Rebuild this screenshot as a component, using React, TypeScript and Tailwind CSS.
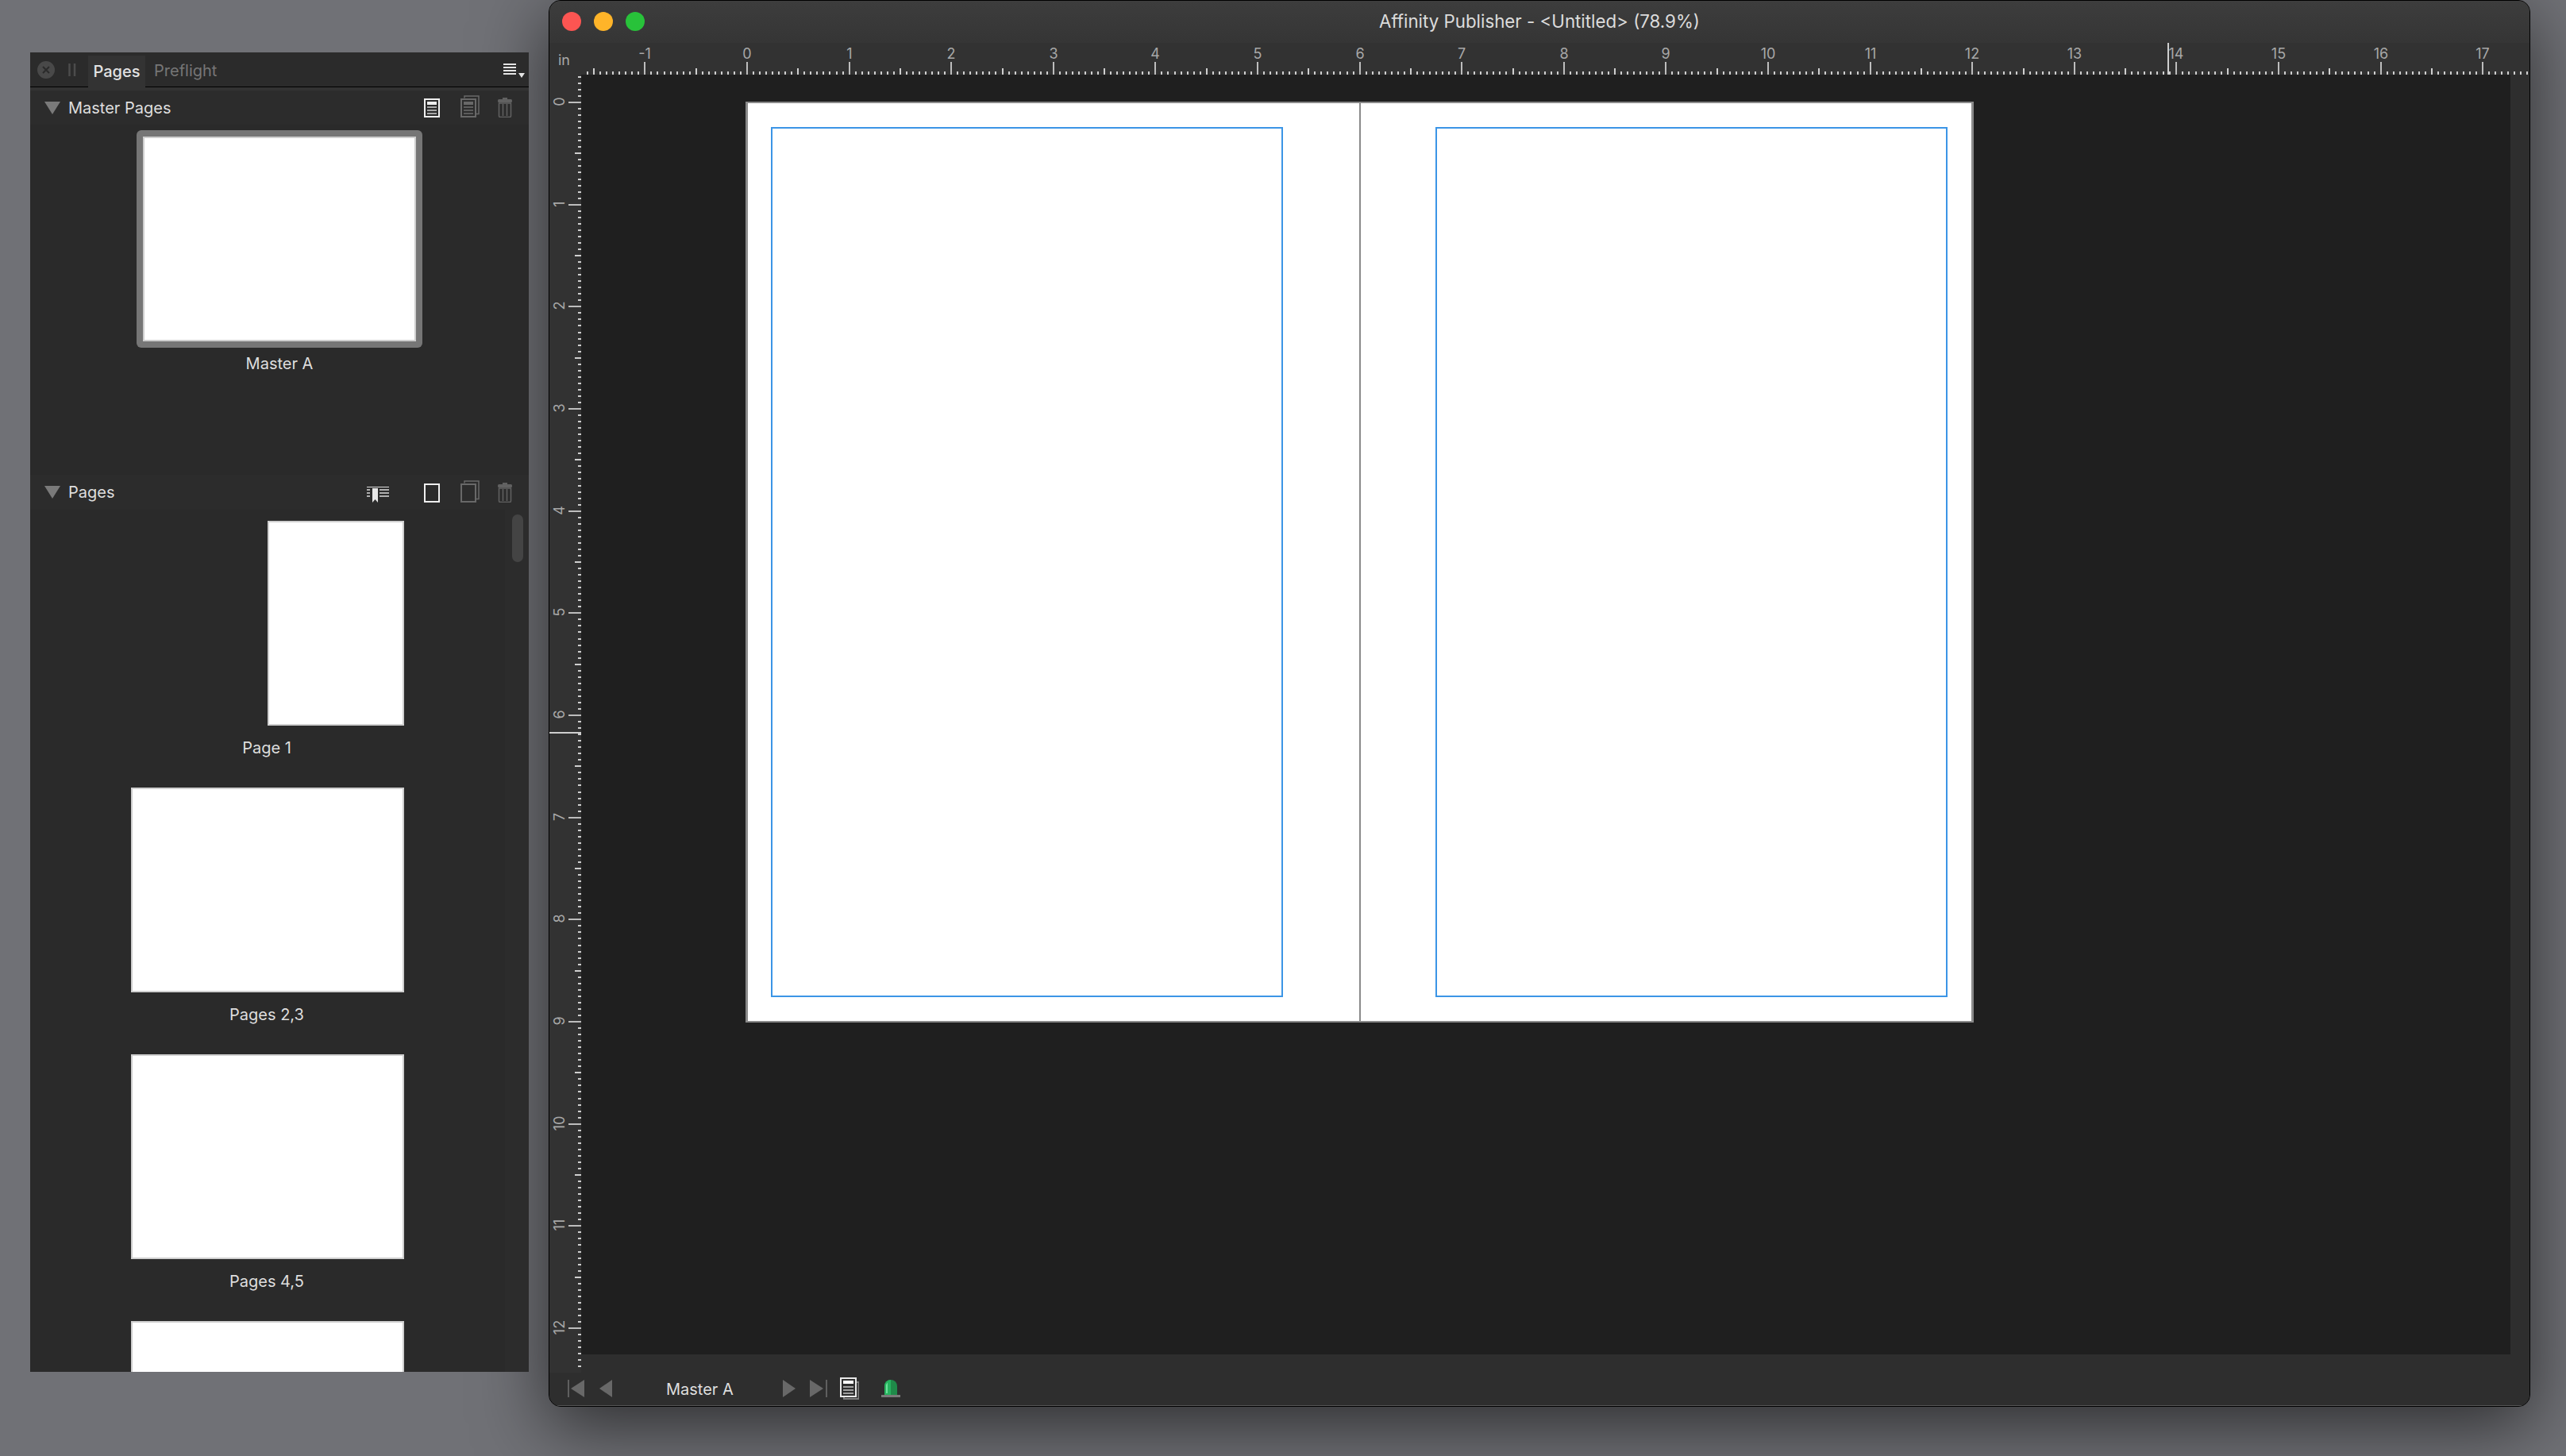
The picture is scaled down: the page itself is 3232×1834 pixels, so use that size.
import React from 'react';

const UNIT_X = 128.6;
const UNIT_Y = 128.67;

function tickSize(i: number) {
  if (i % 16 === 0) return 16;
  if (i % 8 === 0) return 8;
  return 4;
}

function TopRuler() {
  const zero = 209;
  const ticks = Array.from({ length: 330 }, (_, k) => k - 26);
  const labels = Array.from({ length: 19 }, (_, k) => k - 1);
  return (
    <div className="relative flex-1 h-[40px] bg-[#323232]">
      <svg width={2454} height={40} className="block">
        {ticks.map((i) => {
          const x = Math.round(zero + (i * UNIT_X) / 16);
          if (x < 6 || x > 2452) return null;
          const h = tickSize(i);
          return <rect key={i} x={x - 1} y={40 - h} width={2} height={h} fill={i % 16 === 0 ? '#bdbdbd' : '#cfcfcf'} />;
        })}
        <rect x={1998} y={0} width={2} height={40} fill="#cfcfcf" />
      </svg>
      {labels.map((n) => (
        <span
          key={n}
          className="absolute top-[2px] w-[40px] h-[24px] leading-[24px] text-center text-[18px] text-[#a8a8a8]"
          style={{ left: Math.round(zero + n * UNIT_X) - 20 }}
        >
          {n}
        </span>
      ))}
    </div>
  );
}

function LeftRuler() {
  const zero = 35;
  const ticks = Array.from({ length: 204 }, (_, k) => k - 4);
  const labels = Array.from({ length: 13 }, (_, k) => k);
  return (
    <div className="relative w-[40px] h-[1635px] shrink-0 bg-[#323232]">
      <svg width={40} height={1635} className="block">
        {ticks.map((i) => {
          const y = Math.round(zero + (i * UNIT_Y) / 16);
          if (y < 0 || y > 1634) return null;
          const w = tickSize(i);
          return <rect key={i} x={40 - w} y={y - 1} width={w} height={2} fill={i % 16 === 0 ? '#bdbdbd' : '#cfcfcf'} />;
        })}
        <rect x={0} y={828} width={40} height={2} fill="#cfcfcf" />
      </svg>
      {labels.map((n) => (
        <span
          key={n}
          className="absolute left-0 w-[26px] h-[26px] leading-[26px] text-center text-[18px] text-[#a8a8a8] -rotate-90"
          style={{ top: Math.round(zero + n * UNIT_Y) - 14 }}
        >
          {n}
        </span>
      ))}
    </div>
  );
}

function MasterIcon({ color, bar, lines }: { color: string; bar: string; lines: string }) {
  return (
    <svg width={20} height={24} viewBox="0 0 20 24" className="block mr-[3px]">
      <rect x={1} y={1} width={18} height={22} fill="none" stroke={color} strokeWidth={2} />
      <rect x={4} y={4} width={12} height={4} fill={bar} />
      <rect x={4} y={10} width={12} height={2} fill={lines} />
      <rect x={4} y={14} width={12} height={2} fill={lines} />
      <rect x={4} y={18} width={12} height={2} fill={lines} />
    </svg>
  );
}

function DoubleMasterIcon() {
  return (
    <svg width={24} height={28} viewBox="0 0 24 28" className="block">
      <path d="M5 3.5V1h18v22.5h-3" fill="none" stroke="#686868" strokeWidth={1.5} />
      <rect x={1} y={5} width={18} height={22} fill="#2c2c2c" stroke="#686868" strokeWidth={2} />
      <rect x={4} y={8} width={12} height={4} fill="#686868" />
      <rect x={4} y={14} width={12} height={2} fill="#5c5c5c" />
      <rect x={4} y={18} width={12} height={2} fill="#5c5c5c" />
      <rect x={4} y={22} width={12} height={2} fill="#5c5c5c" />
    </svg>
  );
}

function DoublePageIcon() {
  return (
    <svg width={24} height={28} viewBox="0 0 24 28" className="block">
      <path d="M5 3.5V1h18v22.5h-3" fill="none" stroke="#686868" strokeWidth={1.5} />
      <rect x={1} y={5} width={18} height={22} fill="#2c2c2c" stroke="#686868" strokeWidth={2} />
    </svg>
  );
}

function TrashIcon() {
  return (
    <svg width={18} height={25} viewBox="0 0 18 25" className="block">
      <rect x={6} y={0} width={6} height={2} fill="#616161" />
      <rect x={0} y={2} width={18} height={4} rx={1.5} fill="#616161" />
      <path d="M1.5 7h15v16a1.5 1.5 0 0 1-1.5 1.5H3A1.5 1.5 0 0 1 1.5 23Z" fill="none" stroke="#616161" strokeWidth={1.5} />
      <path d="M6.5 8v15M11.5 8v15" stroke="#616161" strokeWidth={1.5} />
    </svg>
  );
}

function SpreadIcon() {
  return (
    <svg width={28} height={20} viewBox="0 0 28 20" className="block">
      <path d="M0 .5h28" stroke="#dcdcdc" strokeWidth={1} />
      <path d="M0 4h4M0 8h4M0 12h4M16 4h12M16 8h12M16 12h12" stroke="#b0b0b0" strokeWidth={2} />
      <path d="M7 2h7v18l-3.5-4L7 20Z" fill="#e8e8e8" />
    </svg>
  );
}

function Triangle() {
  return (
    <svg width={20} height={16} viewBox="0 0 20 16" className="block">
      <path d="M0 0h20L10 16Z" fill="#7a7a7a" />
    </svg>
  );
}

function SectionHeader({ title, h, children }: { title: string; h: string; children: React.ReactNode }) {
  return (
    <div className={`flex items-center shrink-0 bg-[#2c2c2c] pl-[18px] ${h}`}>
      <Triangle />
      <span className="ml-[10px] text-[20px] text-[#dedede]">{title}</span>
      <div className="ml-auto mr-[21px] mb-[3px] flex items-end gap-[23px]">{children}</div>
    </div>
  );
}

function Thumb({ label, single, cut }: { label: string; single?: boolean; cut?: boolean }) {
  return (
    <div className={`flex flex-col items-center ${cut ? 'h-[64px]' : 'h-[336px]'}`}>
      <div className="flex justify-end w-[346px] h-[258px] shrink-0">
        <div className={`${single ? 'w-[172px]' : 'w-[344px]'} h-full bg-white border-2 border-[#cfcfcf]`} />
      </div>
      {!cut && <span className="mt-[16px] text-[20px] leading-[24px] text-[#dedede]">{label}</span>}
    </div>
  );
}

function PagesPanel() {
  return (
    <div className="relative z-10 mt-[66px] ml-[38px] flex flex-col w-[628px] h-[1662px] shrink-0 overflow-hidden bg-[#2a2a2a]">
      <div className="flex items-start h-[44px] shrink-0 border-b border-black bg-[#2b2b2b]">
        <svg width={22} height={22} viewBox="0 0 22 22" className="block ml-[9px] mt-[11px]">
          <circle cx={11} cy={11} r={11} fill="#494949" />
          <path d="M7 7l8 8M15 7l-8 8" stroke="#2b2b2b" strokeWidth={2} />
        </svg>
        <svg width={10} height={16} viewBox="0 0 10 16" className="block ml-[17px] mt-[14px]">
          <path d="M1.5 0v16M8 0v16" stroke="#4c4c4c" strokeWidth={2.5} />
        </svg>
        <div className="relative ml-[15px] mt-[4px] flex items-center justify-center w-[72px] h-[44px] pb-[4px] bg-[#333333] text-[20px] font-medium text-[#e2e2e2]">
          Pages
        </div>
        <div className="ml-[11px] mt-[9px] text-[20px] leading-[28px] text-[#767676]">Preflight</div>
        <svg width={28} height={20} viewBox="0 0 28 20" className="block ml-auto mr-[4px] mt-[14px]">
          <path d="M0 1h16M0 5h16M0 9h16M0 13h16" stroke="#e4e4e4" strokeWidth={2} />
          <path d="M19 12h8l-4 6Z" fill="#e4e4e4" />
        </svg>
      </div>
      <div className="h-[4px] shrink-0 bg-[#333333]" />
      <SectionHeader title="Master Pages" h="h-[43px]">
        <MasterIcon color="#efefef" bar="#efefef" lines="#a8a8a8" />
        <DoubleMasterIcon />
        <TrashIcon />
      </SectionHeader>
      <div className="flex flex-col items-center h-[441px] shrink-0 pt-[7px]">
        <div className="p-[8px] rounded-[6px] bg-[#767676]">
          <div className="w-[344px] h-[258px] bg-white border-2 border-[#cfcfcf]" />
        </div>
        <span className="mt-[8px] text-[20px] leading-[24px] text-[#dedede]">Master A</span>
      </div>
      <SectionHeader title="Pages" h="h-[44px]">
        <div className="mr-[21px]"><SpreadIcon /></div>
        <div className="w-[20px] h-[24px] mr-[3px] border-2 border-[#efefef]" />
        <DoublePageIcon />
        <TrashIcon />
      </SectionHeader>
      <div className="relative flex-1 overflow-hidden">
        <div className="flex flex-col w-[596px] pt-[14px]">
          <Thumb label="Page 1" single />
          <Thumb label="Pages 2,3" />
          <Thumb label="Pages 4,5" />
          <Thumb label="" cut />
        </div>
        <div className="absolute top-0 bottom-0 right-0 w-[30px] bg-[#2c2c2c]">
          <div className="ml-[9px] mt-[6px] w-[14px] h-[60px] rounded-full bg-[#444444]" />
        </div>
      </div>
    </div>
  );
}

function StatusBar() {
  return (
    <div className="flex items-center h-[43px] shrink-0 bg-[#2e2e2e] border-b border-[#565656]">
      <svg width={22} height={22} viewBox="0 0 22 22" className="block ml-[23px]">
        <path d="M1 0v22" stroke="#5f5f5f" strokeWidth={2} />
        <path d="M21 0v22L4 11Z" fill="#686868" />
      </svg>
      <svg width={16} height={22} viewBox="0 0 16 22" className="block ml-[18px]">
        <path d="M16 0v22L0 11Z" fill="#686868" />
      </svg>
      <span className="ml-[68px] mt-[2px] w-[147px] text-[20px] text-[#dedede]">Master A</span>
      <svg width={16} height={22} viewBox="0 0 16 22" className="block">
        <path d="M0 0v22l16-11Z" fill="#686868" />
      </svg>
      <svg width={22} height={22} viewBox="0 0 22 22" className="block ml-[18px]">
        <path d="M21 0v22" stroke="#5f5f5f" strokeWidth={2} />
        <path d="M0 0v22l17-11Z" fill="#686868" />
      </svg>
      <svg width={24} height={28} viewBox="0 0 24 28" className="block ml-[16px]">
        <path d="M20 6h3.5v21H5v-3" fill="none" stroke="#7c7c7c" strokeWidth={2} />
        <rect x={1} y={1} width={19} height={23} fill="#2e2e2e" stroke="#e8e8e8" strokeWidth={2} />
        <rect x={4} y={4} width={13} height={4} fill="#ffffff" />
        <rect x={4} y={11} width={13} height={2} fill="#a0a0a0" />
        <rect x={4} y={15} width={13} height={2} fill="#a0a0a0" />
        <rect x={4} y={19} width={13} height={2} fill="#a0a0a0" />
      </svg>
      <svg width={24} height={22} viewBox="0 0 24 22" className="block ml-[28px]">
        <path d="M4 19V8a8 8 0 0 1 16 0v11Z" fill="#1f8a49" />
        <path d="M4 19V8a8 8 0 0 1 8-8v19Z" fill="#27b35f" />
        <path d="M6 17V8a6 6 0 0 1 2-4.5V17Z" fill="#6fe09c" />
        <rect x={0} y={19} width={24} height={3} fill="#7a7a7a" />
      </svg>
    </div>
  );
}

function Spread() {
  return (
    <div className="ml-[207px] mt-[34px] flex w-[1547px] h-[1160px] bg-white border-x-[3px] border-y-2 border-[#8a8a8a]">
      <div className="w-[772px] h-full pl-[29px] pt-[30px] border-r-2 border-[#8a8a8a]">
        <div className="w-[645px] h-[1096px] border-2 border-[#3b95e6]" />
      </div>
      <div className="flex-1 pl-[94px] pt-[30px]">
        <div className="w-[645px] h-[1096px] border-2 border-[#3b95e6]" />
      </div>
    </div>
  );
}

function Window() {
  return (
    <div className="ml-[25px] flex flex-col w-[2496px] h-[1772px] shrink-0 overflow-hidden rounded-[15px] border border-black bg-[#2e2e2e] shadow-[0_24px_90px_rgba(0,0,0,0.6)]">
      <div className="grid grid-cols-[1fr_auto_1fr] items-center h-[53px] shrink-0 pb-[2px] bg-gradient-to-b from-[#3d3d3d] to-[#353535]">
        <div className="flex gap-[16px] pl-[16px]">
          <div className="w-[24px] h-[24px] rounded-full bg-[#fd5552]" />
          <div className="w-[24px] h-[24px] rounded-full bg-[#ffb429]" />
          <div className="w-[24px] h-[24px] rounded-full bg-[#28c23a]" />
        </div>
        <span className="text-[22.3px] text-[#dcdcdc]">Affinity Publisher - &lt;Untitled&gt; (78.9%)</span>
        <div />
      </div>
      <div className="flex h-[40px] shrink-0 bg-[#323232]">
        <span className="w-[40px] shrink-0 pt-[10px] pl-[11px] text-[18px] leading-[24px] text-[#a8a8a8]">in</span>
        <TopRuler />
      </div>
      <div className="flex flex-1 min-h-0">
        <LeftRuler />
        <div className="flex flex-col flex-1 min-w-0">
          <div className="h-[1612px] mr-[24px] overflow-hidden bg-[#1f1f1f]">
            <Spread />
          </div>
        </div>
      </div>
      <StatusBar />
    </div>
  );
}

export default function App() {
  return (
    <div className="flex items-start w-[3232px] h-[1834px] overflow-hidden bg-[#707176] font-['Inter',sans-serif]">
      <PagesPanel />
      <Window />
    </div>
  );
}
